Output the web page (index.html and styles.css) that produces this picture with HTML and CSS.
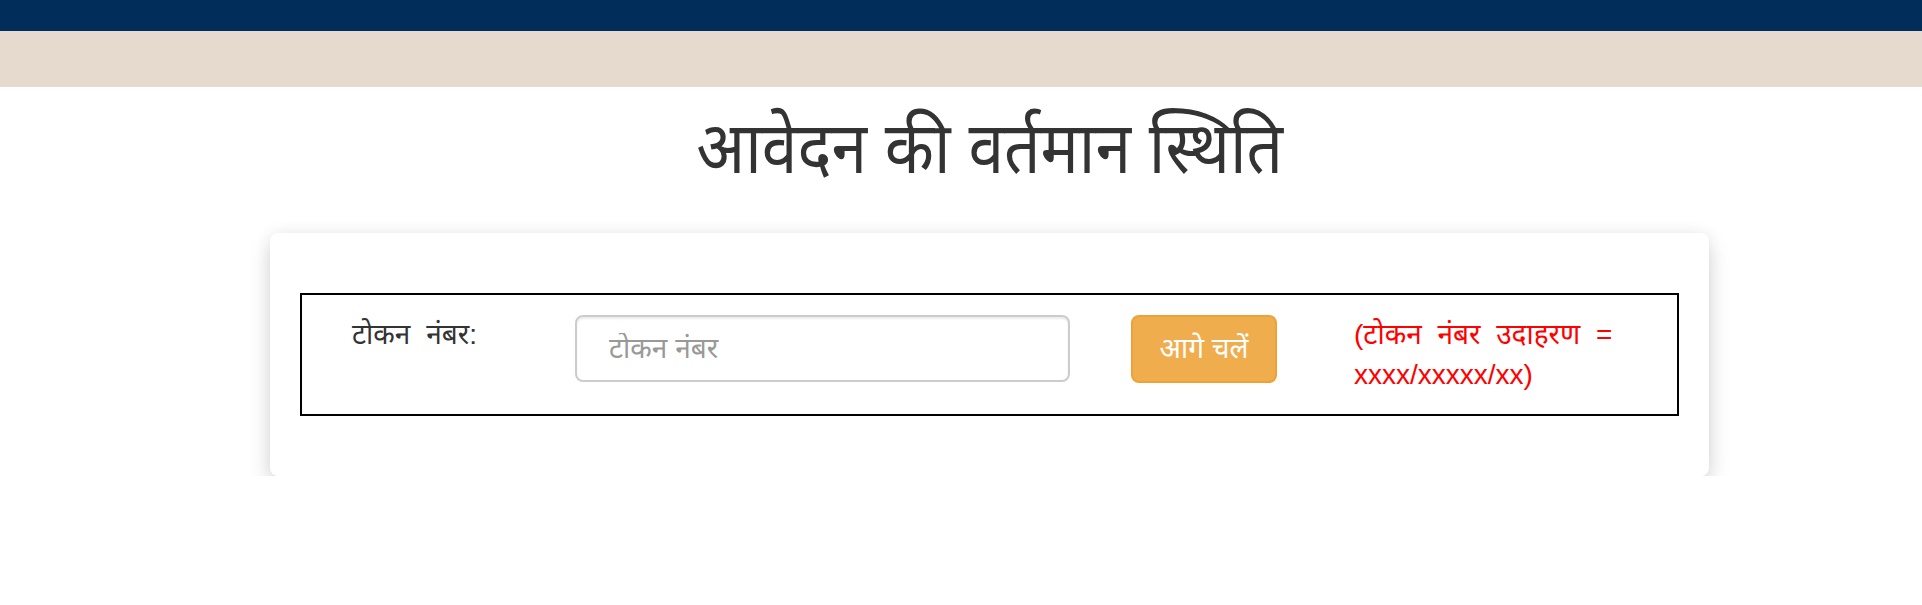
FILE: index.html
```html
<!DOCTYPE html>
<html lang="hi">
<head>
<meta charset="utf-8">
<title>आवेदन की वर्तमान स्थिति</title>
<link rel="stylesheet" href="styles.css">
</head>
<body>
<div class="topbar"></div>
<div class="subbar"></div>
<main class="wrap">
  <h1 class="title"><span class="title-text">आवेदन की वर्तमान स्थिति</span></h1>
  <section class="card">
    <div class="box">
      <label class="lbl" for="token">टोकन नंबर:</label>
      <div class="field"><input id="token" class="input" type="text" placeholder="टोकन नंबर"></div>
      <div class="act"><button class="btn" type="button">आगे चलें</button></div>
      <p class="hint">(टोकन नंबर उदाहरण = xxxx/xxxxx/xx)</p>
    </div>
  </section>
</main>
</body>
</html>
```

FILE: styles.css
```css
* { box-sizing: border-box; }
html, body { margin: 0; padding: 0; background: #fff; }
body {
  font-family: "Liberation Sans", "Noto Sans Devanagari", "Noto Sans", Arial, sans-serif;
  font-size: 28px;
  line-height: 1.42857;
  color: #333;
}
.topbar { height: 31px; background: #002d5a; }
.subbar { height: 56px; background: #e6dace; }
.wrap { width: 1439px; margin-left: 270px; }
.title {
  margin: 0;
  padding-top: 22px;
  height: 146px;
  text-align: center;
  font-size: 72px;
  font-weight: 400;
  line-height: 1.1;
  color: #333;
}
.title-text {
  display: inline-block;
  transform: scaleX(0.89);
  transform-origin: 50% 50%;
}
.card {
  background: #fff;
  border-radius: 8px;
  box-shadow: 0 10px 22px rgba(0,0,0,0.15), 0 0 16px rgba(0,0,0,0.06);
  padding: 60px 30px;
}
.box {
  border: 2px solid #000;
  padding: 20px 0 19px 50px;
  display: grid;
  grid-template-columns: 223px 556px 223px 1fr;
  align-items: start;
}
.lbl { display: block; color: #333; word-spacing: 8px; }
.input {
  display: block;
  width: 495px;
  height: 67px;
  padding: 12px 32px;
  font: inherit;
  color: #555;
  border: 2px solid #ccc;
  border-radius: 8px;
  background: #fff;
  box-shadow: inset 0 2px 2px rgba(0,0,0,0.075);
}
.input::placeholder { color: #999; }
.btn {
  display: block;
  width: 146px;
  height: 68px;
  padding: 12px 20px;
  font: inherit;
  color: #fff;
  background: #f0ad4e;
  border: 2px solid #eea236;
  border-radius: 8px;
  white-space: nowrap;
}
.hint {
  margin: 0;
  padding-right: 30px;
  color: #f00;
  word-spacing: 8px;
}
```
